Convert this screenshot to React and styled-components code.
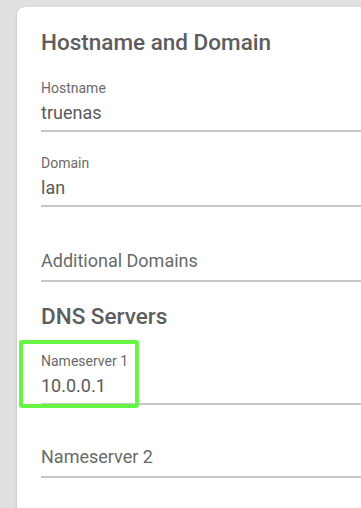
import React from "react";
import styled, { createGlobalStyle } from "styled-components";

const GlobalStyle = createGlobalStyle`
  html, body {
    margin: 0;
    padding: 0;
    background: #e0e0e0;
    overflow: hidden;
    font-family: Roboto, "Liberation Sans", sans-serif;
  }
`;

const Page = styled.div`
  padding: 7px 0 0 17px;
  height: 508px;
  box-sizing: border-box;
`;

const Card = styled.div`
  width: 400px;
  height: 520px;
  background: #ffffff;
  border-radius: 8px 0 0 0;
  box-shadow: 0 1px 3px rgba(0, 0, 0, 0.22);
  padding: 21px 0 0 24px;
  box-sizing: border-box;
`;

const SectionTitle = styled.h2`
  margin: 0;
  font-size: 22.5px;
  line-height: 28px;
  font-weight: 500;
  color: #5d5d5d;
  margin-top: ${(p) => p.$top || 0}px;
`;

const Field = styled.div`
  position: relative;
  display: flex;
  flex-direction: column;
  padding-top: ${(p) => p.$top}px;
  border-bottom: 2px solid #c8c8c8;
`;

const Label = styled.div`
  font-size: 14px;
  line-height: 16px;
  color: #6a6a6a;
`;

const Value = styled.div`
  font-size: 18px;
  line-height: 24px;
  margin-top: ${(p) => (p.$placeholder ? 19 : 5)}px;
  padding-bottom: ${(p) => (p.$placeholder ? 7 : 5)}px;
  color: ${(p) => (p.$placeholder ? "#6a6a6a" : "#5a5a5a")};
`;

const Highlight = styled.div`
  position: absolute;
  left: -22px;
  top: 10px;
  width: 112px;
  height: 60px;
  border: 4px solid #66f544;
  border-radius: 3px;
  z-index: 2;
`;

const FormField = ({ label, value, top = 23, highlight }) => (
  <Field $top={top}>
    {highlight && <Highlight />}
    {value ? (
      <>
        <Label>{label}</Label>
        <Value>{value}</Value>
      </>
    ) : (
      <Value $placeholder>{label}</Value>
    )}
  </Field>
);

export default function App() {
  return (
    <Page>
      <GlobalStyle />
      <Card>
        <SectionTitle>Hostname and Domain</SectionTitle>
        <FormField label="Hostname" value="truenas" top={24} />
        <FormField label="Domain" value="lan" />
        <FormField label="Additional Domains" />
        <SectionTitle $top={20}>DNS Servers</SectionTitle>
        <FormField label="Nameserver 1" value="10.0.0.1" top={23} highlight />
        <FormField label="Nameserver 2" top={21} />
      </Card>
    </Page>
  );
}
